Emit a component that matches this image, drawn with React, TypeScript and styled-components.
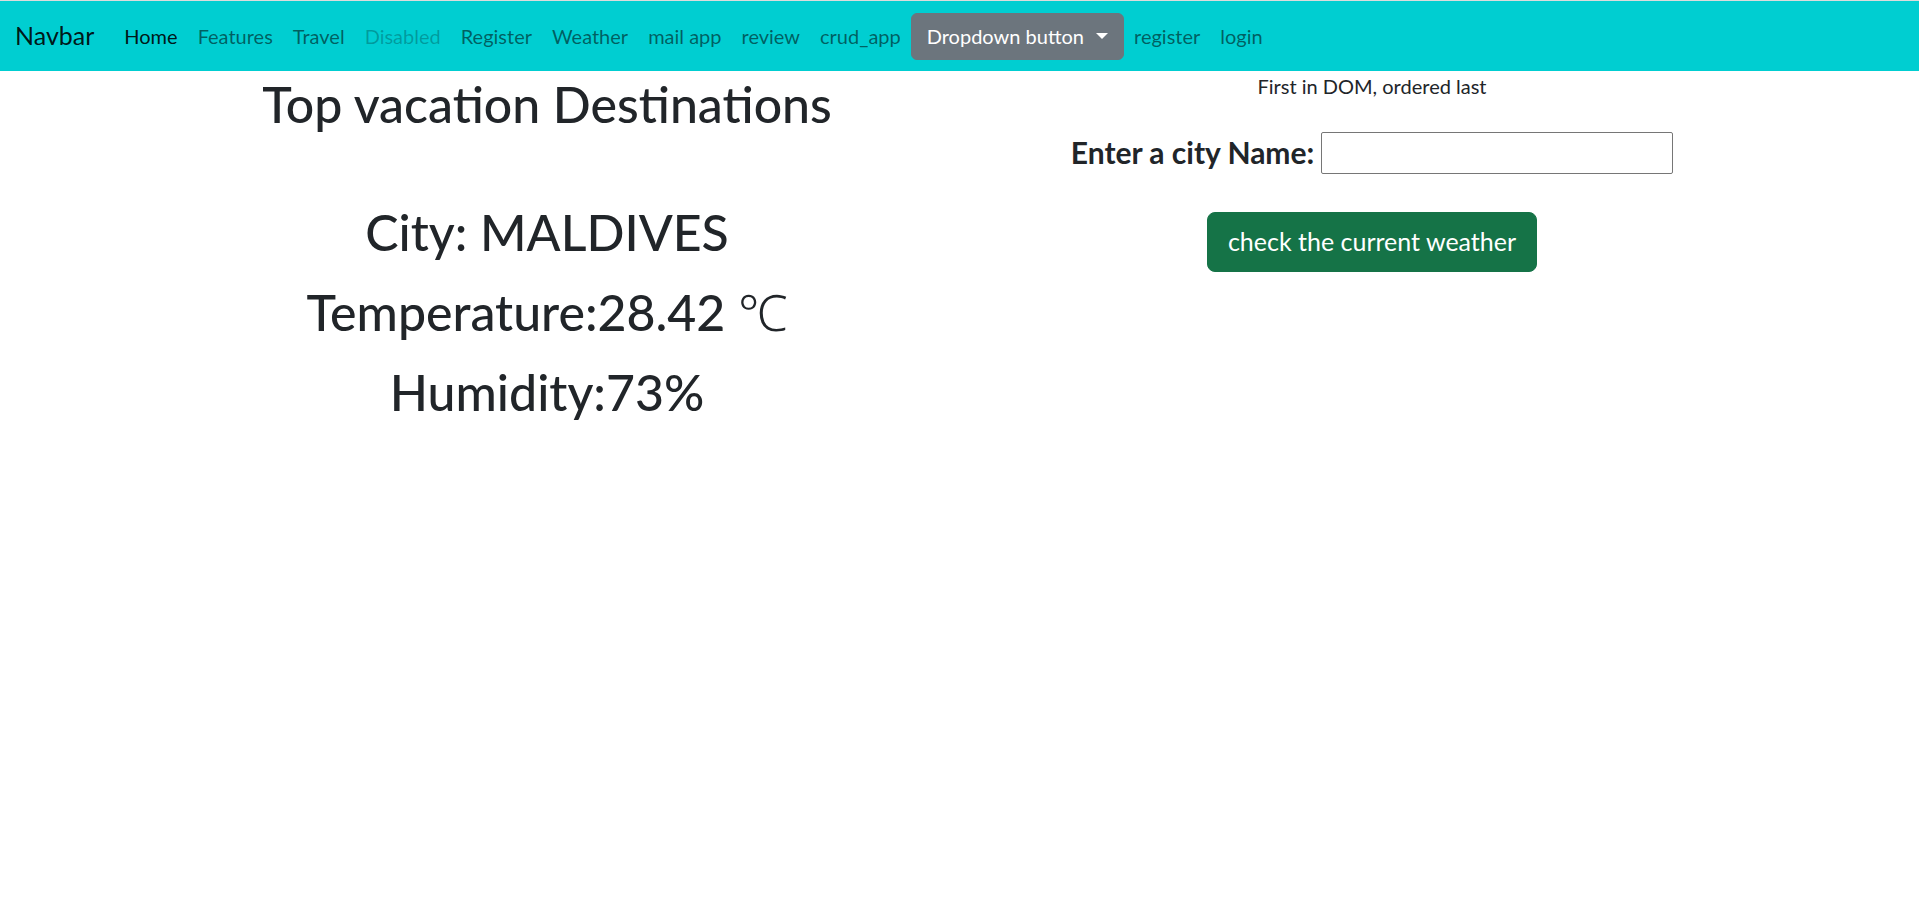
import { createGlobalStyle, styled } from "styled-components";

const GlobalStyle = createGlobalStyle`
  *, *::before, *::after {
    box-sizing: border-box;
  }
  body {
    margin: 0;
    font-family: Lato, "Noto Sans", sans-serif;
    font-size: 20px;
    line-height: 1.5;
    color: #212529;
    background: #fff;
  }
`;

const Nav = styled.nav`
  display: flex;
  align-items: center;
  height: 71px;
  padding: 0 15px;
  border-top: 1px solid #dcdcdc;
  background-color: #00ced1;
`;

const Brand = styled.a`
  margin-right: 20px;
  font-size: 25px;
  color: rgba(0, 0, 0, 0.9);
  text-decoration: none;
`;

const NavLinks = styled.ul`
  display: flex;
  align-items: center;
  margin: 0;
  padding: 0;
  list-style: none;
`;

const NavLink = styled.a<{ $state?: "active" | "disabled" }>`
  display: block;
  padding: 10px;
  color: ${(p) =>
    p.$state === "active"
      ? "rgba(0, 0, 0, 0.9)"
      : p.$state === "disabled"
      ? "rgba(0, 0, 0, 0.25)"
      : "rgba(0, 0, 0, 0.55)"};
  text-decoration: none;
`;

const DropdownButton = styled.button`
  display: inline-flex;
  align-items: center;
  height: 47px;
  padding: 0 15px;
  border: 1px solid #6c757d;
  border-radius: 6px;
  background-color: #6c757d;
  color: #fff;
  font-family: inherit;
  font-size: 20px;

  &::after {
    content: "";
    margin-left: 12px;
    border-top: 6px solid;
    border-right: 6px solid transparent;
    border-left: 6px solid transparent;
  }
`;

const Container = styled.main`
  display: grid;
  grid-template-columns: 1fr 1fr;
  width: 1650px;
  margin: 0 auto;
`;

const Column = styled.section`
  display: flex;
  flex-direction: column;
  align-items: center;
  padding: 0 15px;
  text-align: center;
`;

const Heading = styled.h1<{ $gap: number }>`
  margin: 0 0 ${(p) => p.$gap}px;
  font-size: 50px;
  font-weight: 500;
  line-height: 60px;

  &:first-child {
    margin-top: 3px;
  }
`;

const Unit = styled.span`
  font-weight: 300;
`;

const Note = styled.p`
  margin: 0 0 29px;
`;

const Field = styled.div`
  display: flex;
  align-items: center;
  gap: 7px;
  margin-bottom: 37px;
`;

const Label = styled.label`
  font-size: 30px;
  font-weight: 700;
`;

const CityInput = styled.input`
  width: 352px;
  height: 42px;
  border: 1px solid #767676;
  border-radius: 2px;
  font-size: 20px;
  padding: 2px 4px;
`;

const SubmitButton = styled.button`
  padding: 10px 20px;
  border: 1px solid #157347;
  border-radius: 8px;
  background-color: #157347;
  color: #fff;
  font-family: inherit;
  font-size: 25px;
  line-height: 37.5px;
`;

const links = [
  "Features",
  "Travel",
  "Disabled",
  "Register",
  "Weather",
  "mail app",
  "review",
  "crud_app",
];

export default function App() {
  return (
    <>
      <GlobalStyle />
      <Nav>
        <Brand href="#">Navbar</Brand>
        <NavLinks>
          <li>
            <NavLink href="#" $state="active">
              Home
            </NavLink>
          </li>
          {links.map((l) => (
            <li key={l}>
              <NavLink href="#" $state={l === "Disabled" ? "disabled" : undefined}>
                {l}
              </NavLink>
            </li>
          ))}
          <li>
            <DropdownButton type="button">Dropdown button</DropdownButton>
          </li>
          <li>
            <NavLink href="#">register</NavLink>
          </li>
          <li>
            <NavLink href="#">login</NavLink>
          </li>
        </NavLinks>
      </Nav>
      <Container>
        <Column>
          <Heading $gap={68}>Top vacation Destinations</Heading>
          <Heading $gap={20}>City: MALDIVES</Heading>
          <Heading $gap={20}>
            Temperature:28.42 <Unit>℃</Unit>
          </Heading>
          <Heading $gap={20}>Humidity:73%</Heading>
        </Column>
        <Column>
          <Note>First in DOM, ordered last</Note>
          <Field>
            <Label htmlFor="city">Enter a city Name:</Label>
            <CityInput id="city" type="text" />
          </Field>
          <SubmitButton type="button">check the current weather</SubmitButton>
        </Column>
      </Container>
    </>
  );
}
